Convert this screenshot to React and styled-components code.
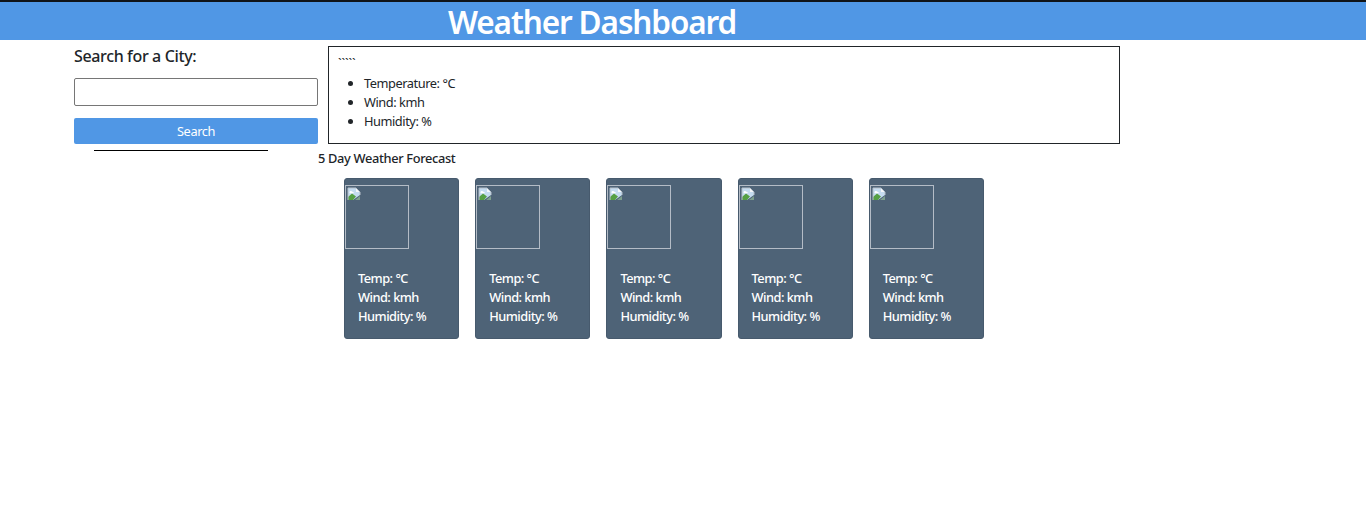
import React from "react";
import styled, { createGlobalStyle } from "styled-components";

const GlobalStyle = createGlobalStyle`
  *, *::before, *::after { box-sizing: border-box; }
  body {
    margin: 0;
    background: #fff;
    color: #212529;
    font-family: "Segoe UI", "Noto Sans", "Open Sans", sans-serif;
    font-size: 12.8px;
    line-height: 19px;
  }
`;

const Header = styled.header`
  height: 40px;
  border-top: 2px solid #101418;
  background: #5097e5;
  padding-left: 448px;
`;

const Title = styled.h1`
  margin: 0;
  color: #fff;
  font-size: 31.5px;
  font-weight: 600;
  line-height: 40px;
  letter-spacing: -1.1px;
  white-space: nowrap;
`;

const Layout = styled.main`
  display: flex;
  align-items: flex-start;
  padding: 6px 0 0 74px;
`;

const SearchPanel = styled.aside`
  width: 244px;
  display: flex;
  flex-direction: column;
`;

const SearchLabel = styled.label`
  height: 32px;
  font-size: 16px;
  font-weight: 500;
  line-height: 21px;
  letter-spacing: -0.36px;
`;

const SearchInput = styled.input`
  height: 28px;
  border: 1px solid #767676;
  border-radius: 2px;
  padding: 1px 6px;
  font: inherit;
`;

const SearchButton = styled.button`
  height: 26px;
  margin-top: 12px;
  padding: 1px 0 0;
  border: 0;
  border-radius: 2px;
  background: #5097e5;
  color: #fff;
  font: inherit;
  letter-spacing: -0.4px;
`;

const Divider = styled.hr`
  width: 174px;
  height: 1px;
  margin: 6px 0 0 20px;
  border: 0;
  background: #000;
`;

const Content = styled.section`
  width: 802px;
`;

const CurrentWeather = styled.div`
  height: 98px;
  margin-left: 10px;
  border: 1px solid #212529;
  padding: 7px 9px;
`;

const CityName = styled.div`
  height: 20px;
  letter-spacing: -0.1px;
`;

const CurrentList = styled.ul`
  margin: 0;
  padding-left: 26px;
  letter-spacing: -0.45px;
`;

const ForecastTitle = styled.h2`
  margin: 5px 0 0;
  height: 29px;
  font-size: 12.8px;
  font-weight: 500;
  line-height: 19px;
  letter-spacing: -0.33px;
`;

const Forecast = styled.div`
  display: flex;
  gap: 16px;
  padding-left: 26px;
`;

const Card = styled.article`
  flex: 0 0 115.2px;
  height: 161px;
  padding: 6px 0 0;
  border: 1px solid #475a6d;
  border-radius: 3px;
  background: #4e6377;
  color: #fff;
`;

const MissingImage = styled.div`
  width: 64px;
  height: 64px;
  padding: 1px;
  border: 1px solid #b4bcc6;

  svg { display: block; }
`;

const CardBody = styled.div`
  padding: 20px 0 0 13px;
  font-weight: 500;
  letter-spacing: -0.52px;
`;

function BrokenImageIcon() {
  return (
    <svg width="14" height="14" viewBox="0 0 14 14" aria-hidden="true">
      <path d="M1 1h8l4 4v3L6 13H1z" fill="#c5dcf0" />
      <path d="M1 13V10l4-3.500 4 3L6 13z" fill="#55a044" />
      <path d="M2.500 5.500c0-1.500 2-2 2.700-.8 1.300-.3 1.800.9 1.300 1.500H2.800z" fill="#fff" />
      <path d="M9 1v4h4z" fill="#f5f7f9" />
      <path d="M1 13V1h8l4 4v3" fill="none" stroke="#b6c0ca" strokeWidth="1" />
      <path d="M8 13l5-4v4z" fill="#7d9f8d" />
    </svg>
  );
}

const days = [1, 2, 3, 4, 5];

export default function App() {
  return (
    <>
      <GlobalStyle />
      <Header><Title>Weather Dashboard</Title></Header>
      <Layout>
        <SearchPanel>
          <SearchLabel htmlFor="city">Search for a City:</SearchLabel>
          <SearchInput id="city" type="text" />
          <SearchButton type="button">Search</SearchButton>
          <Divider />
        </SearchPanel>
        <Content>
          <CurrentWeather>
            <CityName>`````</CityName>
            <CurrentList>
              <li>Temperature: °C</li>
              <li>Wind: kmh</li>
              <li>Humidity: %</li>
            </CurrentList>
          </CurrentWeather>
          <ForecastTitle>5 Day Weather Forecast</ForecastTitle>
          <Forecast>
            {days.map((day) => (
              <Card key={day}>
                <MissingImage><BrokenImageIcon /></MissingImage>
                <CardBody>
                  <div>Temp: °C</div>
                  <div>Wind: kmh</div>
                  <div>Humidity: %</div>
                </CardBody>
              </Card>
            ))}
          </Forecast>
        </Content>
      </Layout>
    </>
  );
}
